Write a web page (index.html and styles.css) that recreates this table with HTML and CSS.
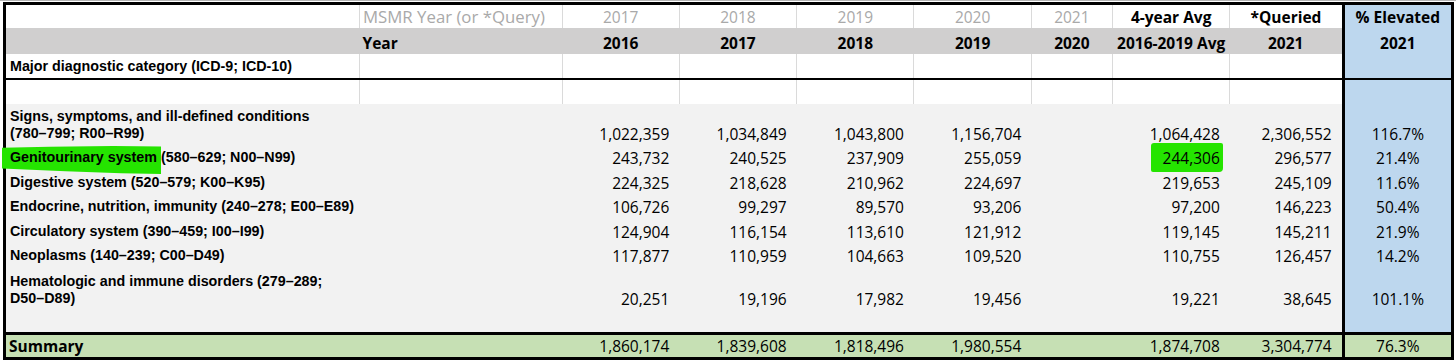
FILE: index.html
```html
<!DOCTYPE html>
<html lang="en">
<head>
    <meta charset="UTF-8">
    <meta name="viewport" content="width=device-width, initial-scale=1.0">
    <title>MSMR diagnostic categories</title>
    <link rel="stylesheet" href="styles.css">
</head>
<body>
<div class="sheet">
<table class="msmr">
    <colgroup>
        <col class="c-label">
        <col class="c-year">
        <col class="c-num">
        <col class="c-num">
        <col class="c-num">
        <col class="c-num">
        <col class="c-2020">
        <col class="c-num">
        <col class="c-query">
        <col class="c-pct">
    </colgroup>
    <thead>
        <tr class="r-msmr">
            <th></th>
            <th class="left">MSMR Year (or *Query)</th>
            <th>2017</th>
            <th>2018</th>
            <th>2019</th>
            <th>2020</th>
            <th>2021</th>
            <th class="dark">4-year Avg</th>
            <th class="dark">*Queried</th>
            <th class="pct">% Elevated</th>
        </tr>
        <tr class="r-year">
            <th></th>
            <th class="left">Year</th>
            <th>2016</th>
            <th>2017</th>
            <th>2018</th>
            <th>2019</th>
            <th>2020</th>
            <th>2016-2019 Avg</th>
            <th>2021</th>
            <th class="pct">2021</th>
        </tr>
        <tr class="r-cat">
            <th class="label">Major diagnostic category (ICD-9; ICD-10)</th>
            <td></td><td></td><td></td><td></td><td></td><td></td><td></td><td></td>
            <td class="pct"></td>
        </tr>
        <tr class="r-blank">
            <td></td><td></td><td></td><td></td><td></td><td></td><td></td><td></td><td></td>
            <td class="pct"></td>
        </tr>
    </thead>
    <tbody>
        <tr class="r-tall">
            <td class="label">Signs, symptoms, and ill-defined conditions<br>(780&ndash;799; R00&ndash;R99)</td>
            <td></td>
            <td>1,022,359</td><td>1,034,849</td><td>1,043,800</td><td>1,156,704</td>
            <td></td>
            <td>1,064,428</td><td>2,306,552</td>
            <td class="pct">116.7%</td>
        </tr>
        <tr>
            <td class="label"><span class="mark mark-brush">Genitourinary system</span> (580&ndash;629; N00&ndash;N99)</td>
            <td></td>
            <td>243,732</td><td>240,525</td><td>237,909</td><td>255,059</td>
            <td></td>
            <td><span class="mark mark-box">244,306</span></td><td>296,577</td>
            <td class="pct">21.4%</td>
        </tr>
        <tr>
            <td class="label">Digestive system (520&ndash;579; K00&ndash;K95)</td>
            <td></td>
            <td>224,325</td><td>218,628</td><td>210,962</td><td>224,697</td>
            <td></td>
            <td>219,653</td><td>245,109</td>
            <td class="pct">11.6%</td>
        </tr>
        <tr>
            <td class="label">Endocrine, nutrition, immunity (240&ndash;278; E00&ndash;E89)</td>
            <td></td>
            <td>106,726</td><td>99,297</td><td>89,570</td><td>93,206</td>
            <td></td>
            <td>97,200</td><td>146,223</td>
            <td class="pct">50.4%</td>
        </tr>
        <tr>
            <td class="label">Circulatory system (390&ndash;459; I00&ndash;I99)</td>
            <td></td>
            <td>124,904</td><td>116,154</td><td>113,610</td><td>121,912</td>
            <td></td>
            <td>119,145</td><td>145,211</td>
            <td class="pct">21.9%</td>
        </tr>
        <tr>
            <td class="label">Neoplasms (140&ndash;239; C00&ndash;D49)</td>
            <td></td>
            <td>117,877</td><td>110,959</td><td>104,663</td><td>109,520</td>
            <td></td>
            <td>110,755</td><td>126,457</td>
            <td class="pct">14.2%</td>
        </tr>
        <tr class="r-tall r-hema">
            <td class="label">Hematologic and immune disorders (279&ndash;289;<br>D50&ndash;D89)</td>
            <td></td>
            <td>20,251</td><td>19,196</td><td>17,982</td><td>19,456</td>
            <td></td>
            <td>19,221</td><td>38,645</td>
            <td class="pct">101.1%</td>
        </tr>
        <tr class="r-gap">
            <td></td><td></td><td></td><td></td><td></td><td></td><td></td><td></td><td></td>
            <td class="pct"></td>
        </tr>
    </tbody>
    <tfoot>
        <tr class="r-sum">
            <th class="left">Summary</th>
            <td></td>
            <td>1,860,174</td><td>1,839,608</td><td>1,818,496</td><td>1,980,554</td>
            <td></td>
            <td>1,874,708</td><td>3,304,774</td>
            <td class="pct">76.3%</td>
        </tr>
    </tfoot>
</table>
</div>
</body>
</html>
```

FILE: styles.css
```css
body {
    margin: 0;
    padding: 0;
    background: #fff;
    color: #000;
    font-family: 'Open Sans', 'Liberation Sans', sans-serif;
}
.sheet {
    border-top: 1px solid #b5b5b5;
    padding: 1px 0 0 3px;
}
.msmr {
    width: 1451px;
    table-layout: fixed;
    border-collapse: collapse;
    border: 3px solid #000;
    font-size: 15.5px;
}
.c-label { width: 354px; }
.c-year { width: 202px; }
.c-num { width: 117px; }
.c-2020 { width: 81px; }
.c-query { width: 113px; }
.c-pct { width: 109px; }

.msmr th,
.msmr td {
    box-sizing: border-box;
    padding: 0 10px 1px 4px;
    white-space: nowrap;
    vertical-align: bottom;
    text-align: right;
    line-height: 20px;
}
.msmr thead th {
    text-align: center;
    padding: 0 4px 1px;
}
.msmr th.left,
.msmr thead th.left {
    text-align: left;
    padding-left: 3px;
}

/* header rows */
.r-msmr th {
    height: 24px;
    font-weight: normal;
    color: #a9a9a9;
    border-left: 1px solid #dadada;
}
.r-msmr th.left {
    font-size: 16.8px;
}
.r-msmr th.dark {
    color: #000;
    font-weight: bold;
}
.r-year th {
    height: 26px;
    background: #d0cfcf;
    font-weight: bold;
    padding-bottom: 2px;
}
.r-cat th,
.r-cat td {
    height: 25px;
    border-left: 1px solid #dadada;
    border-bottom: 2px solid #000;
}
.r-blank td {
    height: 25px;
    border-left: 1px solid #dadada;
}

/* category labels */
.msmr .label {
    font-family: 'Liberation Sans', Arial, sans-serif;
    font-size: 14.3px;
    font-weight: bold;
    text-align: left;
    line-height: 17px;
    padding: 0 4px 3px 4px;
}

/* body rows */
.msmr tbody td {
    height: 24.5px;
    background: #f2f2f2;
}
.msmr tbody .r-tall td {
    height: 41px;
}
.msmr tbody .r-hema td {
    height: 42.5px;
}
.msmr tbody .r-gap td {
    height: 24px;
}

/* % column */
.msmr .pct {
    background: #bdd7ee;
    border-left: 3px solid #000;
    text-align: center;
    padding: 0 2px 1px;
}
.msmr tbody td.pct {
    background: #bdd7ee;
}
.r-msmr th.pct {
    color: #000;
    font-weight: bold;
}

/* summary */
.r-sum th,
.r-sum td {
    height: 25px;
    background: #c6e0b4;
    border-top: 3px solid #000;
    padding-bottom: 1px;
}
.r-sum th {
    font-weight: bold;
    font-size: 15.5px;
    padding-left: 4px;
}
.r-sum td.pct {
    background: #c6e0b4;
}

/* highlighter marks */
.mark {
    position: relative;
    z-index: 0;
}
.mark::before {
    content: "";
    position: absolute;
    z-index: -1;
    background: #25e400;
}
.mark-brush::before {
    left: -8px;
    right: -4px;
    top: -3px;
    bottom: -9px;
    clip-path: polygon(0 6%, 30% 3%, 70% 0, 100% 2%, 100% 100%, 75% 97%, 40% 90%, 0 80%);
}
.mark-box::before {
    left: -12px;
    right: -3px;
    top: -4px;
    bottom: -3px;
    border-radius: 3px 2px 4px 2px;
}
```
